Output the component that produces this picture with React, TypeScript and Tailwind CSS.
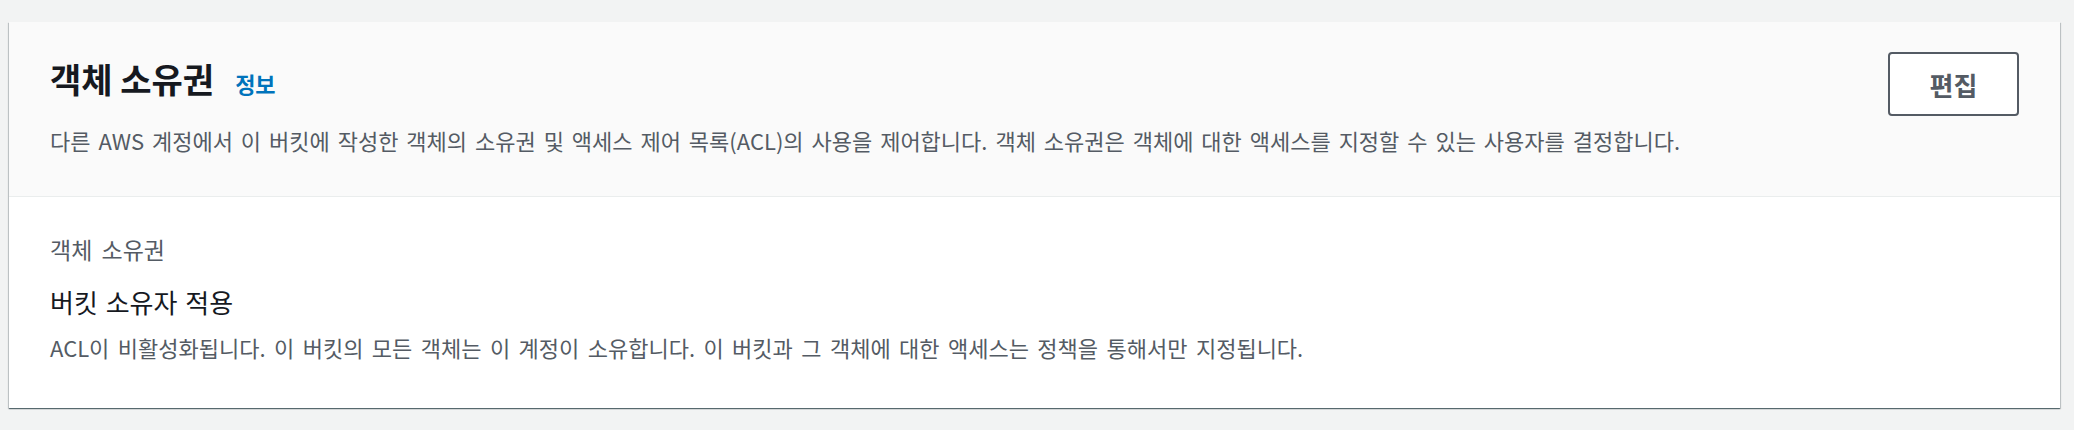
export default function App() {
  return (
    <div
      className="min-h-screen bg-[#f2f3f3] pt-[22px] pl-[9px] pr-[14px] pb-[22px]"
      style={{ fontFamily: '"Noto Sans CJK KR", "Noto Sans", sans-serif' }}
    >
      <div className="bg-white shadow-[0_1px_1px_0_rgba(0,28,36,0.5),1px_1px_1px_0_rgba(0,28,36,0.15),-1px_1px_1px_0_rgba(0,28,36,0.15)]">
        <div className="flex h-[175px] items-start justify-between border-b border-[#eaeded] bg-[#fafafa] px-[41px] pt-[30px]">
          <div className="pt-[7px]">
            <div className="flex items-baseline gap-[21px]">
              <h2 className="text-[34px] font-bold leading-[40px] text-[#16191f]">객체 소유권</h2>
              <a href="#" className="text-[22px] font-bold text-[#0073bb]">
                정보
              </a>
            </div>
            <p className="mt-[26px] text-[22px] leading-[28px] text-[#545b64] [word-spacing:3px]">
              다른 AWS 계정에서 이 버킷에 작성한 객체의 소유권 및 액세스 제어 목록(ACL)의 사용을 제어합니다. 객체 소유권은 객체에 대한
              액세스를 지정할 수 있는 사용자를 결정합니다.
            </p>
          </div>
          <button className="h-[64px] w-[131px] rounded-[4px] border-2 border-[#545b64] bg-white text-[26px] font-bold text-[#545b64]">
            편집
          </button>
        </div>
        <div className="px-[41px] pt-[37px] pb-[47px]">
          <div className="text-[23px] leading-[30px] text-[#545b64] [word-spacing:4px]">객체 소유권</div>
          <div className="mt-[23px] text-[26px] leading-[30px] text-[#16191f] [word-spacing:2px]">버킷 소유자 적용</div>
          <div className="mt-[16px] text-[22px] leading-[28px] text-[#545b64] [word-spacing:3.5px]">
            ACL이 비활성화됩니다. 이 버킷의 모든 객체는 이 계정이 소유합니다. 이 버킷과 그 객체에 대한 액세스는 정책을 통해서만 지정됩니다.
          </div>
        </div>
      </div>
    </div>
  );
}
